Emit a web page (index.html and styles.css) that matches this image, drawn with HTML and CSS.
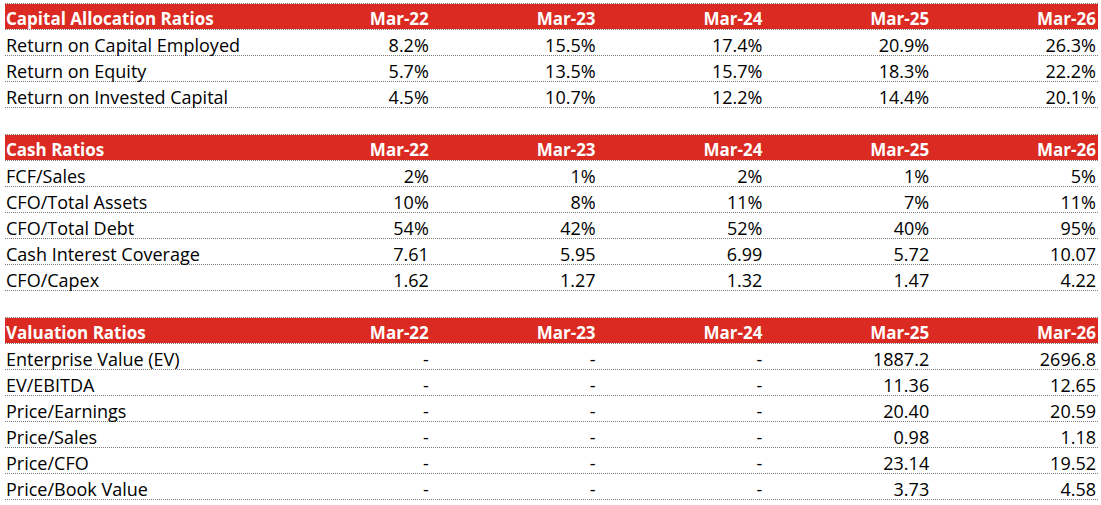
FILE: index.html
```html
<!DOCTYPE html>
<html>
<head>
<meta charset="utf-8">
<link rel="stylesheet" href="styles.css">
</head>
<body>
<div class="sheet">
  <section class="block">
    <div class="row head"><div class="lbl">Capital Allocation Ratios</div><div>Mar-22</div><div>Mar-23</div><div>Mar-24</div><div>Mar-25</div><div>Mar-26</div></div>
    <div class="row"><div class="lbl">Return on Capital Employed</div><div>8.2%</div><div>15.5%</div><div>17.4%</div><div>20.9%</div><div>26.3%</div></div>
    <div class="row"><div class="lbl">Return on Equity</div><div>5.7%</div><div>13.5%</div><div>15.7%</div><div>18.3%</div><div>22.2%</div></div>
    <div class="row"><div class="lbl">Return on Invested Capital</div><div>4.5%</div><div>10.7%</div><div>12.2%</div><div>14.4%</div><div>20.1%</div></div>
  </section>
  <section class="block">
    <div class="row head"><div class="lbl">Cash Ratios</div><div>Mar-22</div><div>Mar-23</div><div>Mar-24</div><div>Mar-25</div><div>Mar-26</div></div>
    <div class="row"><div class="lbl">FCF/Sales</div><div>2%</div><div>1%</div><div>2%</div><div>1%</div><div>5%</div></div>
    <div class="row"><div class="lbl">CFO/Total Assets</div><div>10%</div><div>8%</div><div>11%</div><div>7%</div><div>11%</div></div>
    <div class="row"><div class="lbl">CFO/Total Debt</div><div>54%</div><div>42%</div><div>52%</div><div>40%</div><div>95%</div></div>
    <div class="row"><div class="lbl">Cash Interest Coverage</div><div>7.61</div><div>5.95</div><div>6.99</div><div>5.72</div><div>10.07</div></div>
    <div class="row"><div class="lbl">CFO/Capex</div><div>1.62</div><div>1.27</div><div>1.32</div><div>1.47</div><div>4.22</div></div>
  </section>
  <section class="block">
    <div class="row head"><div class="lbl">Valuation Ratios</div><div>Mar-22</div><div>Mar-23</div><div>Mar-24</div><div>Mar-25</div><div>Mar-26</div></div>
    <div class="row"><div class="lbl">Enterprise Value (EV)</div><div>-</div><div>-</div><div>-</div><div>1887.2</div><div>2696.8</div></div>
    <div class="row"><div class="lbl">EV/EBITDA</div><div>-</div><div>-</div><div>-</div><div>11.36</div><div>12.65</div></div>
    <div class="row"><div class="lbl">Price/Earnings</div><div>-</div><div>-</div><div>-</div><div>20.40</div><div>20.59</div></div>
    <div class="row"><div class="lbl">Price/Sales</div><div>-</div><div>-</div><div>-</div><div>0.98</div><div>1.18</div></div>
    <div class="row"><div class="lbl">Price/CFO</div><div>-</div><div>-</div><div>-</div><div>23.14</div><div>19.52</div></div>
    <div class="row"><div class="lbl">Price/Book Value</div><div>-</div><div>-</div><div>-</div><div>3.73</div><div>4.58</div></div>
  </section>
</div>
</body>
</html>
```
FILE: styles.css
```css
html, body {
  margin: 0;
  padding: 0;
  background: #ffffff;
}
body {
  font-family: "Open Sans", "Liberation Sans", sans-serif;
  font-size: 18px;
  color: #000000;
}
.sheet {
  padding: 3px 0 0 5px;
  width: 1093px;
}
.block {
  border-bottom: 1px dotted #7a7a7a;
  margin-bottom: 26px;
}
.row {
  display: grid;
  grid-template-columns: 259px repeat(5, 1fr);
  height: 26px;
  box-sizing: border-box;
  border-top: 1px dotted #7a7a7a;
  align-items: end;
  line-height: 20px;
}
.row > div {
  text-align: right;
  padding-right: 2px;
  white-space: nowrap;
}
.row > .lbl {
  text-align: left;
  padding-left: 1px;
  padding-right: 0;
}
.head {
  background: #da2a21;
  background-clip: padding-box;
  color: #ffffff;
  font-weight: 700;
  font-size: 17px;
}
```
